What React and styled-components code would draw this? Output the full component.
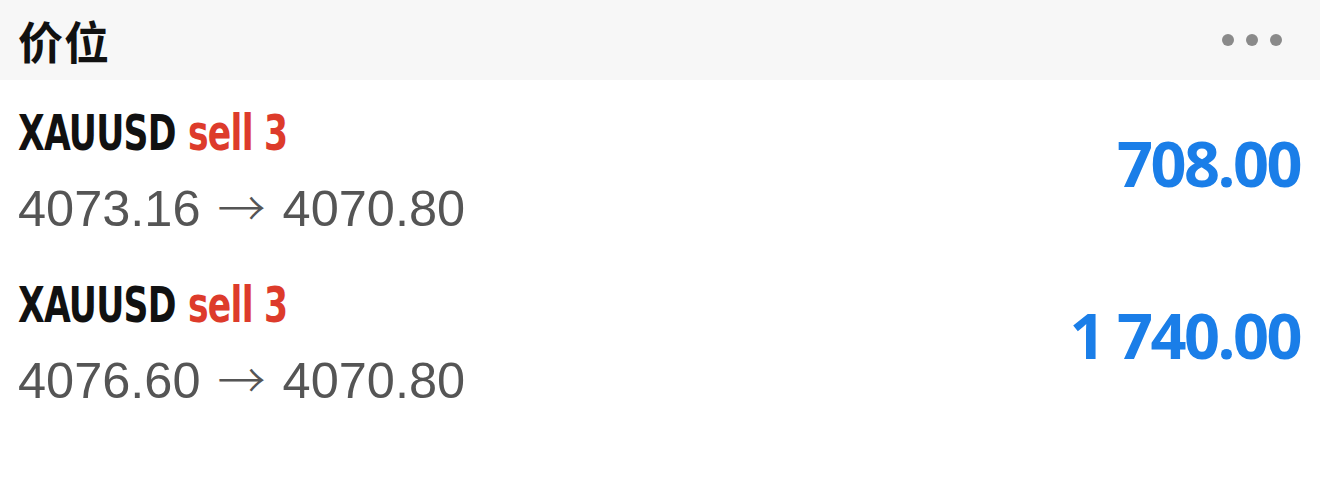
import React from 'react';
import styled, { createGlobalStyle } from 'styled-components';

const GlobalStyle = createGlobalStyle`
  html, body {
    margin: 0;
    padding: 0;
    background: #ffffff;
  }
  body {
    font-family: "Liberation Sans", "Noto Sans CJK SC", sans-serif;
  }
`;

const Page = styled.div`
  width: 1320px;
  height: 502px;
  background: #fff;
  overflow: hidden;
`;

const Header = styled.div`
  height: 80px;
  background: #f7f7f7;
  display: flex;
  align-items: center;
  justify-content: space-between;
  padding: 0 38px 0 18px;
  box-sizing: border-box;
`;

const Title = styled.h1`
  margin: 0;
  font-family: "Noto Sans CJK SC", sans-serif;
  font-size: 45px;
  font-weight: 700;
  color: #111;
  letter-spacing: 1px;
`;

const Dots = styled.div`
  display: flex;
  gap: 12px;
`;

const Dot = styled.span`
  width: 12px;
  height: 12px;
  border-radius: 50%;
  background: #8a8a8a;
`;

const List = styled.div`
  display: flex;
  flex-direction: column;
  padding-top: 18px;
  gap: 24px;
`;

const Row = styled.div`
  display: flex;
  align-items: center;
  justify-content: space-between;
  padding: 0 20px 0 18px;
  height: 148px;
`;

const Info = styled.div`
  display: flex;
  flex-direction: column;
  align-items: flex-start;
  gap: 17px;
`;

// condensed bold title line: "XAUUSD sell 3"
const Symbol = styled.div`
  font-family: "DejaVu Sans Condensed", "DejaVu Sans", sans-serif;
  font-size: 50px;
  font-weight: 700;
  line-height: 52px;
  color: #111;
  letter-spacing: -1px;
  white-space: nowrap;
  transform: scaleX(0.77);
  transform-origin: left center;
`;

const Side = styled.span`
  color: ${(p) => (p.$sell ? '#dd3b2b' : '#1a7ee8')};
  margin-left: 16px;
`;

const Prices = styled.div`
  font-family: "Liberation Sans", sans-serif;
  font-size: 50.5px;
  line-height: 58px;
  color: #555;
`;

const Arrow = styled.span`
  font-family: "Noto Sans CJK SC", sans-serif;
  font-weight: 300;
  font-size: 48px;
  margin: 0 17px;
`;

const Profit = styled.div`
  font-family: "Open Sans", sans-serif;
  font-size: 63px;
  font-weight: 700;
  color: #1a7ee8;
  letter-spacing: -2.5px;
  margin-bottom: 20px;
`;

const positions = [
  { symbol: 'XAUUSD', side: 'sell', volume: 3, open: '4073.16', close: '4070.80', profit: '708.00' },
  { symbol: 'XAUUSD', side: 'sell', volume: 3, open: '4076.60', close: '4070.80', profit: '1 740.00' },
];

export default function App() {
  return (
    <Page>
      <GlobalStyle />
      <Header>
        <Title>价位</Title>
        <Dots>
          <Dot />
          <Dot />
          <Dot />
        </Dots>
      </Header>
      <List>
        {positions.map((p, i) => (
          <Row key={i}>
            <Info>
              <Symbol>
                {p.symbol}
                <Side $sell={p.side === 'sell'}>
                  {p.side} {p.volume}
                </Side>
              </Symbol>
              <Prices>
                {p.open}
                <Arrow>→</Arrow>
                {p.close}
              </Prices>
            </Info>
            <Profit>{p.profit}</Profit>
          </Row>
        ))}
      </List>
    </Page>
  );
}
